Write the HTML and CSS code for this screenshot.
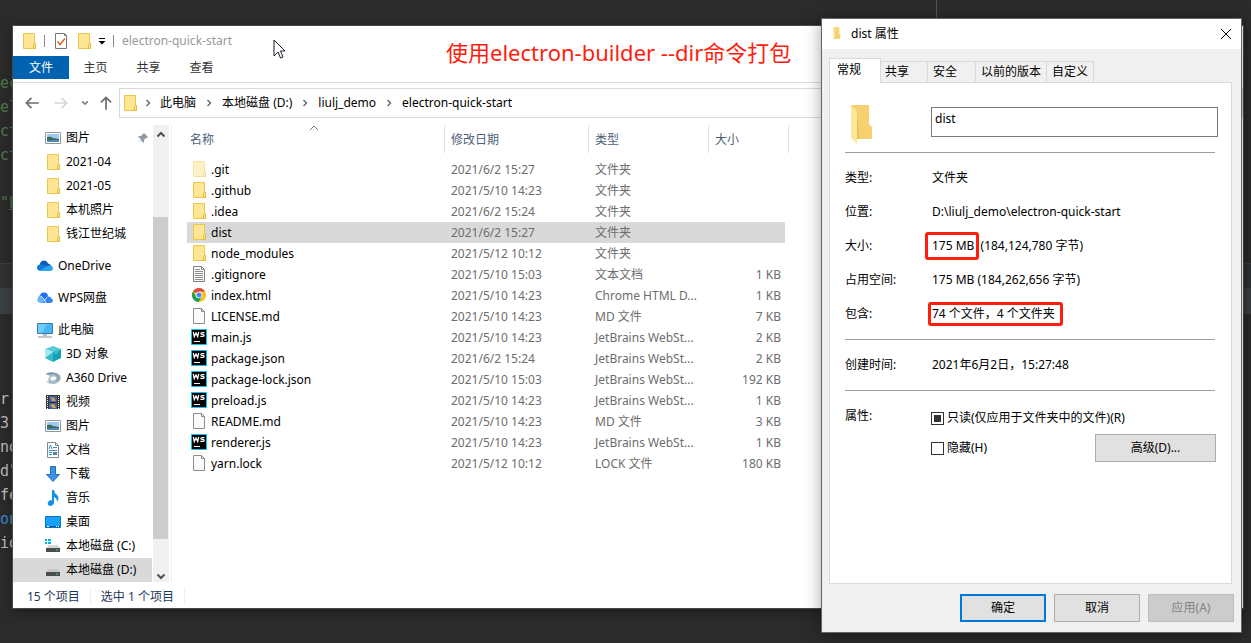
FILE: index.html
```
<!DOCTYPE html>
<html lang="zh-CN">
<head>
  <meta charset="UTF-8" />
  <meta name="viewport" content="width=device-width, initial-scale=1.0" />
  <title>electron-quick-start</title>
  <link rel="stylesheet" href="styles.css">
</head>
<body>

  <!-- Icon set -->
  <svg class="sprite" aria-hidden="true">
    <symbol id="folder" viewBox="-1 0 16 16">
      <path d="M1.500 .5h11v10h1v5h-12z" fill="#ffe694" stroke="#ecc64a"/>
      <path d="M11.500 15.500v-4l1-1h1v5z" fill="#ffe694" stroke="#e6b93a"/>
    </symbol>
    <symbol id="picture" viewBox="0 0 16 16">
      <path d="M.5 2.500h15v11H.5z" fill="#fff" stroke="#8f969b"/>
      <path d="M2 4h12v8H2z" fill="#9cc9f0"/>
      <path d="M2 7q4-1 6 1l6 1v3H2z" fill="#3d6b58"/>
      <path d="M2 10h12v2H2z" fill="#4d86b8"/>
    </symbol>
    <symbol id="onedrive" viewBox="0 0 16 16">
      <path d="M3 8a4 4 0 0 1 8-2.500A3 3 0 0 1 14 8l-7 3z" fill="#0a5bb5"/>
      <path d="M3.500 6.500Q7 6 10 9l-7 4A3.200 3.200 0 0 1 3.500 6.500z" fill="#1279d4"/>
      <path d="M3 13l7-5q5-2 6 2 0 3-3 3z" fill="#29a3ea"/>
    </symbol>
    <symbol id="wps" viewBox="0 0 16 16">
      <path d="M1 8q-2 4 2 5h4l2-6-4-2q-4 0-4 3z" fill="#6fb4fb"/>
      <path d="M3 5Q4 2 7 2.500q4 0 4 4L8 13Q6 7 3 5z" fill="#2272ee"/>
      <path d="M6 13l4-6q3-1.500 4.500 1.500Q16 9 16 11q-.5 2-3 2z" fill="#2f83f5"/>
      <path d="M4 6q3 2 5 7M7.500 11q1-3 3-4" fill="none" stroke="#fff" stroke-width=".8"/>
    </symbol>
    <symbol id="pc" viewBox="0 0 16 16">
      <path d="M.5 1.500h15v10H.5z" fill="#47b5f4" stroke="#3b7ca8"/>
      <path d="M1 2h9L5 11H1z" fill="#71cbfa"/>
      <path d="M6 12h4v2H6z" fill="#b3bdc4"/>
      <path d="M1 15h14" stroke="#8395a0"/>
    </symbol>
    <symbol id="cube" viewBox="0 0 16 16">
      <path d="M0 3l8-3 8 3-8 3z" fill="#58c9d6"/>
      <path d="M0 3l8 3v10l-8-4z" fill="#a8e9ee"/>
      <path d="M16 3L8 6v10l8-4z" fill="#11a3b5"/>
      <path d="M8 6l8-3-5 6zM8 6L0 12l8 4z" fill="#3abacb"/>
    </symbol>
    <symbol id="a360" viewBox="0 0 16 16">
      <path d="M0 4Q5 1 10 2.500q6 1 6 5.500-1 5-7 6-6 0-8-3 2 .5 3 0-2-2 1-4.500Q3 4 0 4z" fill="#a9bac6"/>
      <path d="M5.500 8q1-2 4-1.500Q12 7 11 9q-2 2-4 1.500Q5 10 5.500 8z" fill="#fff"/>
      <path d="M2 4q6-2 10 1 3 3 0 6" fill="none" stroke="#6c8799"/>
    </symbol>
    <symbol id="video" viewBox="0 0 16 16">
      <path d="M1 1h14v14H1z" fill="#333"/>
      <path d="M4 2h8v6H4zM4 9h8v6H4z" fill="#4562ae"/>
      <path d="M6 3l3 1 2 3H7zM5 11l4-1 2 4H8z" fill="#dca63e"/>
      <path d="M2.500 2v13M13.500 2v13" stroke="#fff" stroke-dasharray="1 1"/>
    </symbol>
    <symbol id="doc" viewBox="0 0 16 16">
      <path d="M2.500 .5h8l3 3v12h-11z" fill="#fff" stroke="#7d8890"/>
      <path d="M10.500 .5v3h3" fill="none" stroke="#7d8890"/>
      <path d="M4 7l1.500-4L7 7M8 5.500h4M4 8.500h8M4 10.500h3M4 12.500h3" fill="none" stroke="#3792c9"/>
      <path d="M8 10h4v3H8z" fill="#5c8291"/>
    </symbol>
    <symbol id="download" viewBox="0 0 16 16">
      <path d="M5.500 .5h5v8h4L8 15.500 1.500 8.500h4z" fill="#3b92e0" stroke="#2470b8"/>
    </symbol>
    <symbol id="music" viewBox="0 0 16 16">
      <path d="M7 0h2q0 3 3 5 3 3 0 7 0-4-3-5v6q-1 3-4 3-3-1-2-4 1-2 4-2z" fill="#1390ea"/>
    </symbol>
    <symbol id="desktop" viewBox="0 0 16 16">
      <path d="M.5 2.500h15v11H.5z" fill="#18a0fb" stroke="#0874c4"/>
      <path d="M1 12.500h14" stroke="#075b9c"/>
      <path d="M2 12.500h2M11 12.500h1M13 12.500h1" stroke="#fff"/>
    </symbol>
    <symbol id="disk" viewBox="0 0 16 16">
      <path d="M3 7h10l2 4H1z" fill="#c3c6c8"/>
      <path d="M1 10h14v4H1z" fill="#4a4d4f"/>
      <path d="M11 12h2" stroke="#3be03b"/>
    </symbol>
    <symbol id="disk-c" viewBox="0 0 16 16">
      <path d="M4 7h9l2 4H1z" fill="#d3d6d8"/>
      <path d="M1 10h14v4H1z" fill="#4a4d4f"/>
      <path d="M11 12h2" stroke="#3be03b"/>
      <path d="M0 1h2v2H0zM3 1h3v2H3zM0 4h2v2H0zM3 4h3v2H3z" fill="#00b4f0"/>
    </symbol>
    <symbol id="pin" viewBox="0 0 12 12">
      <path d="M7 1l4 4-1 1H9L7 8v2L6 11 4 8 1 11 4 7 1 5l1-1h2l2-2z" fill="#8f9ba3"/>
    </symbol>
    <symbol id="page" viewBox="-1 0 16 16">
      <path d="M1.500 .5h8l3 3v12h-11z" fill="#fafafa" stroke="#8c8c8c"/>
      <path d="M9.500 .5v3h3" fill="none" stroke="#8c8c8c"/>
    </symbol>
    <symbol id="text" viewBox="-1 0 16 16">
      <path d="M1.500 .5h8l3 3v12h-11z" fill="#fafafa" stroke="#808080"/>
      <path d="M9.500 .5v3h3M3 3.500h5M3 5.500h8M3 7.500h8M3 9.500h8M3 11.500h8M3 13.500h8" fill="none" stroke="#8c8c8c"/>
    </symbol>
    <symbol id="chrome" viewBox="0 0 16 16">
      <circle cx="8" cy="8" r="7" fill="#fbc116"/>
      <path d="M8 8L1.900 4.500A7 7 0 0 1 14.100 4.500H8z" fill="#dd4b3e"/>
      <path d="M1.900 4.500A7 7 0 0 0 7.500 15L11 9.700 8 8 5 9.700z" fill="#1a9f5b"/>
      <circle cx="8" cy="8" r="3.300" fill="#fff"/>
      <circle cx="8" cy="8" r="2.500" fill="#4587f3"/>
    </symbol>
    <symbol id="ws" viewBox="0 0 16 16">
      <path d="M.5 .5h15v15H.5z" fill="#000" stroke="#07c3f2"/>
      <path d="M2.300 3l1 4.500L5 4l1.700 3.500 1-4.500M13.500 3.700h-2.300q-1.500 0-1.200 1 .2.600 1.500.7 1.700.2 1.600 1-.2 1-1.500 1H9.300" fill="none" stroke="#fff" stroke-width="1.300"/>
      <path d="M3 12.500h6" stroke="#fff"/>
    </symbol>
    <symbol id="bigfolder" viewBox="0 0 24 42">
      <path d="M1 1h18v19l3 3v12H7z" fill="#f5d16f"/>
      <path d="M1 1l6 6v33l-6-6z" fill="#ffe597"/>
      <path d="M7 35V7l2 28z" fill="#e6bd55"/>
    </symbol>
    <symbol id="chevron" viewBox="0 0 8 8">
      <path d="M2.500 1l3 3-3 3" fill="none" stroke="#6d6d6d" stroke-width="1.500"/>
    </symbol>
  </svg>

  <!-- Editor behind the windows -->
  <div class="editor" aria-hidden="true">
    <pre class="code strings">ec
el
ct
ct

"<u>h</u></pre>
    <div class="editor-bar"></div>
    <div class="editor-tabs"></div>
    <pre class="code terminal">r
3
nd
d"
fe
<b>on</b>
id</pre>
  </div>
  <div class="editor-split"></div>

  <!-- File explorer -->
  <section class="explorer">
    <header class="titlebar">
      <svg class="icon"><use href="#folder"/></svg>
      <i class="bar"></i>
      <svg class="icon check-icon" viewBox="0 0 16 16">
        <path d="M2.500 .5h9l2 2v13h-11z" fill="#fff" stroke="#777"/>
        <path d="M11.500 .5v2h2" fill="none" stroke="#777"/>
        <path d="M4.500 8.500l2.500 3 5-6" fill="none" stroke="#e8622a" stroke-width="1.500"/>
      </svg>
      <svg class="icon"><use href="#folder"/></svg>
      <svg class="drop" viewBox="0 0 8 8"><path d="M1 1.500h6" stroke="#000"/><path d="M.5 4h7L4 7.500z"/></svg>
      <i class="bar"></i>
      <span class="window-name">electron-quick-start</span>
    </header>

    <nav class="ribbon">
      <button class="ribbon-tab file">文件</button>
      <button class="ribbon-tab">主页</button>
      <button class="ribbon-tab">共享</button>
      <button class="ribbon-tab">查看</button>
    </nav>

    <div class="navbar">
      <button class="nav-btn" aria-label="后退"><svg viewBox="0 0 16 16"><path d="M14 8H3M7.500 3.500L3 8l4.500 4.500" fill="none" stroke="#6b6b6b" stroke-width="1.500"/></svg></button>
      <button class="nav-btn forward" aria-label="前进"><svg viewBox="0 0 16 16"><path d="M2 8h11M8.500 3.500L13 8l-4.500 4.500" fill="none" stroke="#d6d6d6" stroke-width="1.500"/></svg></button>
      <button class="nav-btn recent" aria-label="最近"><svg viewBox="0 0 16 16"><path d="M5.500 6.500L8 9l2.500-2.500" fill="none" stroke="#808080" stroke-width="1.500"/></svg></button>
      <button class="nav-btn up" aria-label="向上"><svg viewBox="0 0 16 16"><path d="M8 14V3M3.500 7.500L8 3l4.500 4.500" fill="none" stroke="#6b6b6b" stroke-width="1.500"/></svg></button>
      <div class="address">
        <svg class="icon"><use href="#folder"/></svg>
        <svg class="chev first"><use href="#chevron"/></svg>
        <a href="#">此电脑</a>
        <svg class="chev"><use href="#chevron"/></svg>
        <a href="#">本地磁盘 (D:)</a>
        <svg class="chev"><use href="#chevron"/></svg>
        <a href="#">liulj_demo</a>
        <svg class="chev"><use href="#chevron"/></svg>
        <a href="#">electron-quick-start</a>
      </div>
    </div>

    <div class="content">
      <ul class="tree">
        <li class="sub"><svg class="icon"><use href="#picture"/></svg>图片<svg class="pin"><use href="#pin"/></svg></li>
        <li class="sub"><svg class="icon"><use href="#folder"/></svg>2021-04</li>
        <li class="sub"><svg class="icon"><use href="#folder"/></svg>2021-05</li>
        <li class="sub"><svg class="icon"><use href="#folder"/></svg>本机照片</li>
        <li class="sub"><svg class="icon"><use href="#folder"/></svg>钱江世纪城</li>
        <li class="root"><svg class="icon"><use href="#onedrive"/></svg>OneDrive</li>
        <li class="root"><svg class="icon"><use href="#wps"/></svg>WPS网盘</li>
        <li class="root"><svg class="icon"><use href="#pc"/></svg>此电脑</li>
        <li class="sub"><svg class="icon"><use href="#cube"/></svg>3D 对象</li>
        <li class="sub"><svg class="icon"><use href="#a360"/></svg>A360 Drive</li>
        <li class="sub"><svg class="icon"><use href="#video"/></svg>视频</li>
        <li class="sub"><svg class="icon"><use href="#picture"/></svg>图片</li>
        <li class="sub"><svg class="icon"><use href="#doc"/></svg>文档</li>
        <li class="sub"><svg class="icon"><use href="#download"/></svg>下载</li>
        <li class="sub"><svg class="icon"><use href="#music"/></svg>音乐</li>
        <li class="sub"><svg class="icon"><use href="#desktop"/></svg>桌面</li>
        <li class="sub"><svg class="icon"><use href="#disk-c"/></svg>本地磁盘 (C:)</li>
        <li class="sub active"><svg class="icon"><use href="#disk"/></svg>本地磁盘 (D:)</li>
      </ul>
      <div class="scrollbar">
        <svg class="arrow" viewBox="0 0 16 16"><path d="M4.500 10.500L8 7l3.500 3.500" fill="none" stroke="#505050" stroke-width="2"/></svg>
        <div class="thumb"></div>
        <svg class="arrow" viewBox="0 0 16 16"><path d="M4.500 9.500L8 13l3.500-3.500" fill="none" stroke="#505050" stroke-width="2"/></svg>
      </div>

      <main class="files">
        <table>
          <thead>
            <tr>
              <th class="name">名称<svg class="sort" viewBox="0 0 10 6"><path d="M1 5l4-4 4 4" fill="none" stroke="#777"/></svg></th>
              <th class="date">修改日期</th>
              <th class="type">类型</th>
              <th class="size">大小</th>
              <th class="edge"></th>
            </tr>
          </thead>
          <tbody>
            <tr class="hidden-file"><td><svg class="icon"><use href="#folder"/></svg>.git</td><td>2021/6/2 15:27</td><td>文件夹</td><td></td></tr>
            <tr><td><svg class="icon"><use href="#folder"/></svg>.github</td><td>2021/5/10 14:23</td><td>文件夹</td><td></td></tr>
            <tr><td><svg class="icon"><use href="#folder"/></svg>.idea</td><td>2021/6/2 15:24</td><td>文件夹</td><td></td></tr>
            <tr class="selected"><td><svg class="icon"><use href="#folder"/></svg>dist</td><td>2021/6/2 15:27</td><td>文件夹</td><td></td></tr>
            <tr><td><svg class="icon"><use href="#folder"/></svg>node_modules</td><td>2021/5/12 10:12</td><td>文件夹</td><td></td></tr>
            <tr><td><svg class="icon"><use href="#text"/></svg>.gitignore</td><td>2021/5/10 15:03</td><td>文本文档</td><td>1 KB</td></tr>
            <tr><td><svg class="icon"><use href="#chrome"/></svg>index.html</td><td>2021/5/10 14:23</td><td>Chrome HTML D...</td><td>1 KB</td></tr>
            <tr><td><svg class="icon"><use href="#page"/></svg>LICENSE.md</td><td>2021/5/10 14:23</td><td>MD 文件</td><td>7 KB</td></tr>
            <tr><td><svg class="icon"><use href="#ws"/></svg>main.js</td><td>2021/5/10 14:23</td><td>JetBrains WebSt...</td><td>2 KB</td></tr>
            <tr><td><svg class="icon"><use href="#ws"/></svg>package.json</td><td>2021/6/2 15:24</td><td>JetBrains WebSt...</td><td>2 KB</td></tr>
            <tr><td><svg class="icon"><use href="#ws"/></svg>package-lock.json</td><td>2021/5/10 15:03</td><td>JetBrains WebSt...</td><td>192 KB</td></tr>
            <tr><td><svg class="icon"><use href="#ws"/></svg>preload.js</td><td>2021/5/10 14:23</td><td>JetBrains WebSt...</td><td>1 KB</td></tr>
            <tr><td><svg class="icon"><use href="#page"/></svg>README.md</td><td>2021/5/10 14:23</td><td>MD 文件</td><td>3 KB</td></tr>
            <tr><td><svg class="icon"><use href="#ws"/></svg>renderer.js</td><td>2021/5/10 14:23</td><td>JetBrains WebSt...</td><td>1 KB</td></tr>
            <tr><td><svg class="icon"><use href="#page"/></svg>yarn.lock</td><td>2021/5/12 10:12</td><td>LOCK 文件</td><td>180 KB</td></tr>
          </tbody>
        </table>
      </main>
    </div>

    <footer class="status">
      <span>15 个项目</span>
      <span>选中 1 个项目</span>
    </footer>
  </section>

  <!-- Red note and mouse pointer -->
  <p class="note">使用electron-builder --dir命令打包</p>
  <svg class="pointer" viewBox="0 0 13 20"><path d="M1 1v16l4-4 2.500 6 2.500-1-2.500-6H12z" fill="#fff" stroke="#1d1d2b"/></svg>

  <!-- Folder properties -->
  <section class="dialog">
    <header class="dialog-title">
      <svg class="dialog-icon"><use href="#bigfolder"/></svg>
      <span>dist 属性</span>
      <button class="close" aria-label="关闭"><svg viewBox="0 0 12 12"><path d="M1 1l10 10M11 1L1 11" stroke="#000"/></svg></button>
    </header>

    <div class="tabs">
      <button class="tab current">常规</button>
      <button class="tab">共享</button>
      <button class="tab">安全</button>
      <button class="tab">以前的版本</button>
      <button class="tab">自定义</button>
    </div>

    <form class="panel">
      <div class="section head">
        <svg class="big"><use href="#bigfolder"/></svg>
        <input class="folder-name" type="text" value="dist" aria-label="名称">
      </div>
      <dl class="section">
        <dt>类型:</dt><dd>文件夹</dd>
        <dt>位置:</dt><dd>D:\liulj_demo\electron-quick-start</dd>
        <dt>大小:</dt><dd><span class="mark size-mark">175 MB</span> (184,124,780 字节)</dd>
        <dt>占用空间:</dt><dd>175 MB (184,262,656 字节)</dd>
        <dt>包含:</dt><dd><span class="mark short">74 个文件，4 个文件夹</span></dd>
      </dl>
      <dl class="section">
        <dt>创建时间:</dt><dd>2021年6月2日，15:27:48</dd>
      </dl>
      <div class="attributes">
        <span class="attr-label">属性:</span>
        <div class="attr-list">
          <div class="attr-row">
            <input type="checkbox" id="readonly" class="mixed">
            <label for="readonly">只读(仅应用于文件夹中的文件)(R)</label>
          </div>
          <div class="attr-row">
            <input type="checkbox" id="hide">
            <label for="hide">隐藏(H)</label>
            <button type="button" class="btn advanced">高级(D)...</button>
          </div>
        </div>
      </div>
    </form>

    <div class="actions">
      <button class="btn primary">确定</button>
      <button class="btn">取消</button>
      <button class="btn" disabled>应用(A)</button>
    </div>
  </section>

</body>
</html>
```

FILE: styles.css
```
* {
  box-sizing: border-box;
}

body {
  margin: 0;
  min-height: 100vh;
  position: relative;
  overflow: hidden;
  background: #2b2b2b;
  color: #000;
  font-family: "Noto Sans", "Noto Sans CJK SC", sans-serif;
  font-size: 12px;
  line-height: 16px;
}

button,
input {
  font: inherit;
  color: inherit;
}

button {
  border: 0;
  padding: 0;
  background: none;
}

a {
  color: inherit;
  text-decoration: none;
}

.sprite {
  display: none;
}

.icon {
  width: 16px;
  height: 16px;
  flex: none;
}

/* Editor */
.editor {
  padding-top: 71px;
}

.code {
  width: 13px;
  margin: 0;
  overflow: hidden;
  font-family: "DejaVu Sans Mono", monospace;
  font-size: 15px;
  line-height: 24px;
  color: #a9b7c6;
}

.strings {
  color: #4f7a45;
  height: 192px;
}

.editor-bar {
  height: 25px;
  background: #303234;
  border-top: 1px solid #3a3d3f;
}

.editor-tabs {
  height: 26px;
  background: #3b4042;
}

.terminal {
  padding-top: 73px;
  color: #bbb;
}

.terminal b {
  font-weight: normal;
  color: #3a86c8;
}

.editor-split {
  position: absolute;
  top: 0;
  right: 314px;
  width: 1px;
  height: 20px;
  background: #555;
}

/* Explorer window */
.explorer {
  position: absolute;
  top: 26px;
  left: 13px;
  right: 8px;
  background: #fff;
  box-shadow: 0 0 0 1px #4a4a4a, 0 3px 12px rgba(0, 0, 0, 0.4);
}

.titlebar {
  display: flex;
  align-items: center;
  height: 30px;
  padding: 0 8px;
}

.bar {
  width: 1px;
  height: 12px;
  margin: 0 8px 0 7px;
  background: #888;
}

.check-icon {
  margin-right: 7px;
}

.drop {
  width: 8px;
  height: 8px;
  margin: 0 0 0 6px;
}

.window-name {
  color: #999;
}

.ribbon {
  display: flex;
  height: 27px;
  border-bottom: 1px solid #dadbdc;
}

.ribbon-tab {
  width: 53px;
  height: 24px;
  color: #333;
}

.ribbon-tab.file {
  width: 56px;
  height: 23px;
  background: #0063b1;
  color: #fff;
}

.navbar {
  display: flex;
  align-items: center;
  padding: 5px 0 7px 10px;
}

.nav-btn {
  width: 18px;
  height: 18px;
  margin-right: 11px;
}

.nav-btn svg {
  display: block;
  width: 18px;
  height: 18px;
}

.nav-btn.forward {
  margin-right: 6px;
}

.nav-btn.recent {
  margin-right: 3px;
}

.nav-btn.up {
  margin-right: 4px;
}

.address {
  flex: 1;
  display: flex;
  align-items: center;
  height: 30px;
  padding-left: 2px;
  border: 1px solid #d9d9d9;
}

.chev {
  width: 8px;
  height: 8px;
  margin: 0 9px;
}

.chev.first {
  margin: 0 8px 0 6px;
}

.content {
  display: flex;
}

.tree {
  list-style: none;
  width: 139px;
  margin: 0;
  padding: 1px 0 0;
}

.tree li {
  display: flex;
  align-items: center;
  gap: 5px;
  height: 24px;
}

.tree .root {
  margin-top: 8px;
  padding-left: 24px;
}

.tree .sub {
  padding-left: 32px;
}

.tree .active {
  background: #d9d9d9;
}

.pin {
  width: 12px;
  height: 12px;
  margin: 0 3px 0 auto;
}

.scrollbar {
  display: flex;
  flex-direction: column;
  width: 16px;
  margin: 0 2px 0 1px;
  background: #f0f0f0;
}

.arrow {
  width: 16px;
  height: 18px;
}

.thumb {
  flex: 1;
  width: 15px;
  margin: 74px 0 25px;
  background: #cdcdcd;
}

.files {
  flex: 1;
  padding-left: 15px;
  border-left: 1px solid #f0f0f0;
}

.files table {
  border-collapse: separate;
  border-spacing: 0;
  table-layout: fixed;
  width: 602px;
}

.files th {
  position: relative;
  height: 28px;
  padding: 2px 6px 0;
  border-right: 1px solid #e2e2e2;
  color: #4c607a;
  font-weight: normal;
  text-align: left;
}

.files th.name {
  width: 258px;
  padding-left: 3px;
}

.files th.date {
  width: 144px;
}

.files th.type {
  width: 120px;
}

.files th.size {
  width: 76px;
  border-right: 0;
}

.files th.edge {
  padding: 0;
}

.sort {
  position: absolute;
  top: 0;
  left: 122px;
  width: 10px;
  height: 6px;
}

.files tbody::before {
  content: "";
  display: block;
  height: 6px;
}

.files td {
  height: 21px;
  padding: 0 6px;
  color: #6d6d6d;
  white-space: nowrap;
}

.files td:first-child {
  padding-left: 4px;
  color: #000;
}

.files td:last-child {
  padding-right: 4px;
  text-align: right;
}

.files td .icon {
  margin-right: 4px;
  vertical-align: -3px;
}

.hidden-file .icon {
  opacity: 0.5;
}

.selected td {
  background: #d9d9d9;
}

.status {
  display: flex;
  align-items: center;
  height: 26px;
  padding: 3px 0 0 14px;
  color: #1e395b;
}

.status span {
  margin-right: 10px;
  padding-right: 10px;
  border-right: 1px solid #eee;
}

/* Annotations */
.note {
  position: absolute;
  top: 37px;
  left: 446px;
  margin: 0;
  color: #ff1d0d;
  font-size: 22px;
  line-height: 30px;
}

.pointer {
  position: absolute;
  top: 39px;
  left: 273px;
  width: 13px;
  height: 20px;
}

.mark {
  position: relative;
}

.mark::after {
  content: "";
  position: absolute;
  inset: -6px -5px -6px -7px;
  border: 3px solid #ff1d0d;
  border-radius: 3px;
}

.mark.short::after {
  inset: -4px -8px -4px -4px;
}

.size-mark {
  margin-right: 3px;
}

/* Properties dialog */
.dialog {
  position: absolute;
  top: 19px;
  right: 10px;
  width: 419px;
  background: #f0f0f0;
  box-shadow: 0 0 0 1px #666, 0 2px 16px rgba(0, 0, 0, 0.4);
}

.dialog-title {
  display: flex;
  align-items: center;
  height: 30px;
  padding: 0 9px 0 10px;
  background: #fff;
}

.dialog-icon {
  width: 10px;
  height: 14px;
  margin-right: 9px;
}

.close {
  width: 12px;
  height: 12px;
  margin-left: auto;
}

.close svg {
  display: block;
}

.tabs {
  display: flex;
  align-items: flex-end;
  height: 34px;
  margin: 0 9px -1px 7px;
}

.tab {
  min-width: 49px;
  height: 22px;
  margin-left: -1px;
  padding: 0 5px;
  border: 1px solid #d9d9d9;
  text-align: left;
}

.tab:last-child {
  min-width: 0;
}

.tab.current {
  position: relative;
  z-index: 1;
  width: 52px;
  height: 25px;
  margin: 0 -1px 0 0;
  padding: 0 7px 2px;
  border-bottom: 0;
  background: #fff;
}

.panel {
  min-height: 502px;
  margin: 0 9px 0 7px;
  padding: 0 16px 0 15px;
  border: 1px solid #d9d9d9;
  background: #fff;
}

.section {
  display: grid;
  grid-template-columns: 86px 1fr;
  margin: 0;
  padding: 8px 0;
  border-bottom: 1px solid #a0a0a0;
  line-height: 34px;
}

.section dd {
  margin: 0;
  padding-left: 1px;
}

.section dd .mark {
  display: inline-block;
  line-height: 16px;
}

.head {
  padding: 21px 0 6px;
}

.big {
  width: 24px;
  height: 42px;
  margin-left: 5px;
}

.folder-name {
  height: 30px;
  margin: 3px -3px 0 0;
  padding: 0 3px 6px;
  border: 1px solid #7a7a7a;
  border-radius: 0;
  background: #fff;
}

.attributes {
  display: grid;
  grid-template-columns: 86px 1fr;
  padding-top: 12px;
}

.attr-label {
  line-height: 26px;
}

.attr-row {
  display: flex;
  align-items: center;
  gap: 3px;
  height: 30px;
}

.attr-row input {
  appearance: none;
  width: 13px;
  height: 13px;
  margin: 0;
  padding: 2px;
  border: 1px solid #333;
  background: #fff;
}

.attr-row .mixed {
  background: #333 content-box;
}

.btn {
  width: 86px;
  height: 28px;
  border: 1px solid #adadad;
  background: #e1e1e1;
}

.btn.primary {
  border: 2px solid #0078d7;
}

.btn:disabled {
  border-color: #bfbfbf;
  background: #ccc;
  color: #838383;
}

.advanced {
  width: 121px;
  margin: 0 -1px 0 auto;
}

.actions {
  display: flex;
  justify-content: flex-end;
  gap: 8px;
  padding: 10px 7px;
}
```
